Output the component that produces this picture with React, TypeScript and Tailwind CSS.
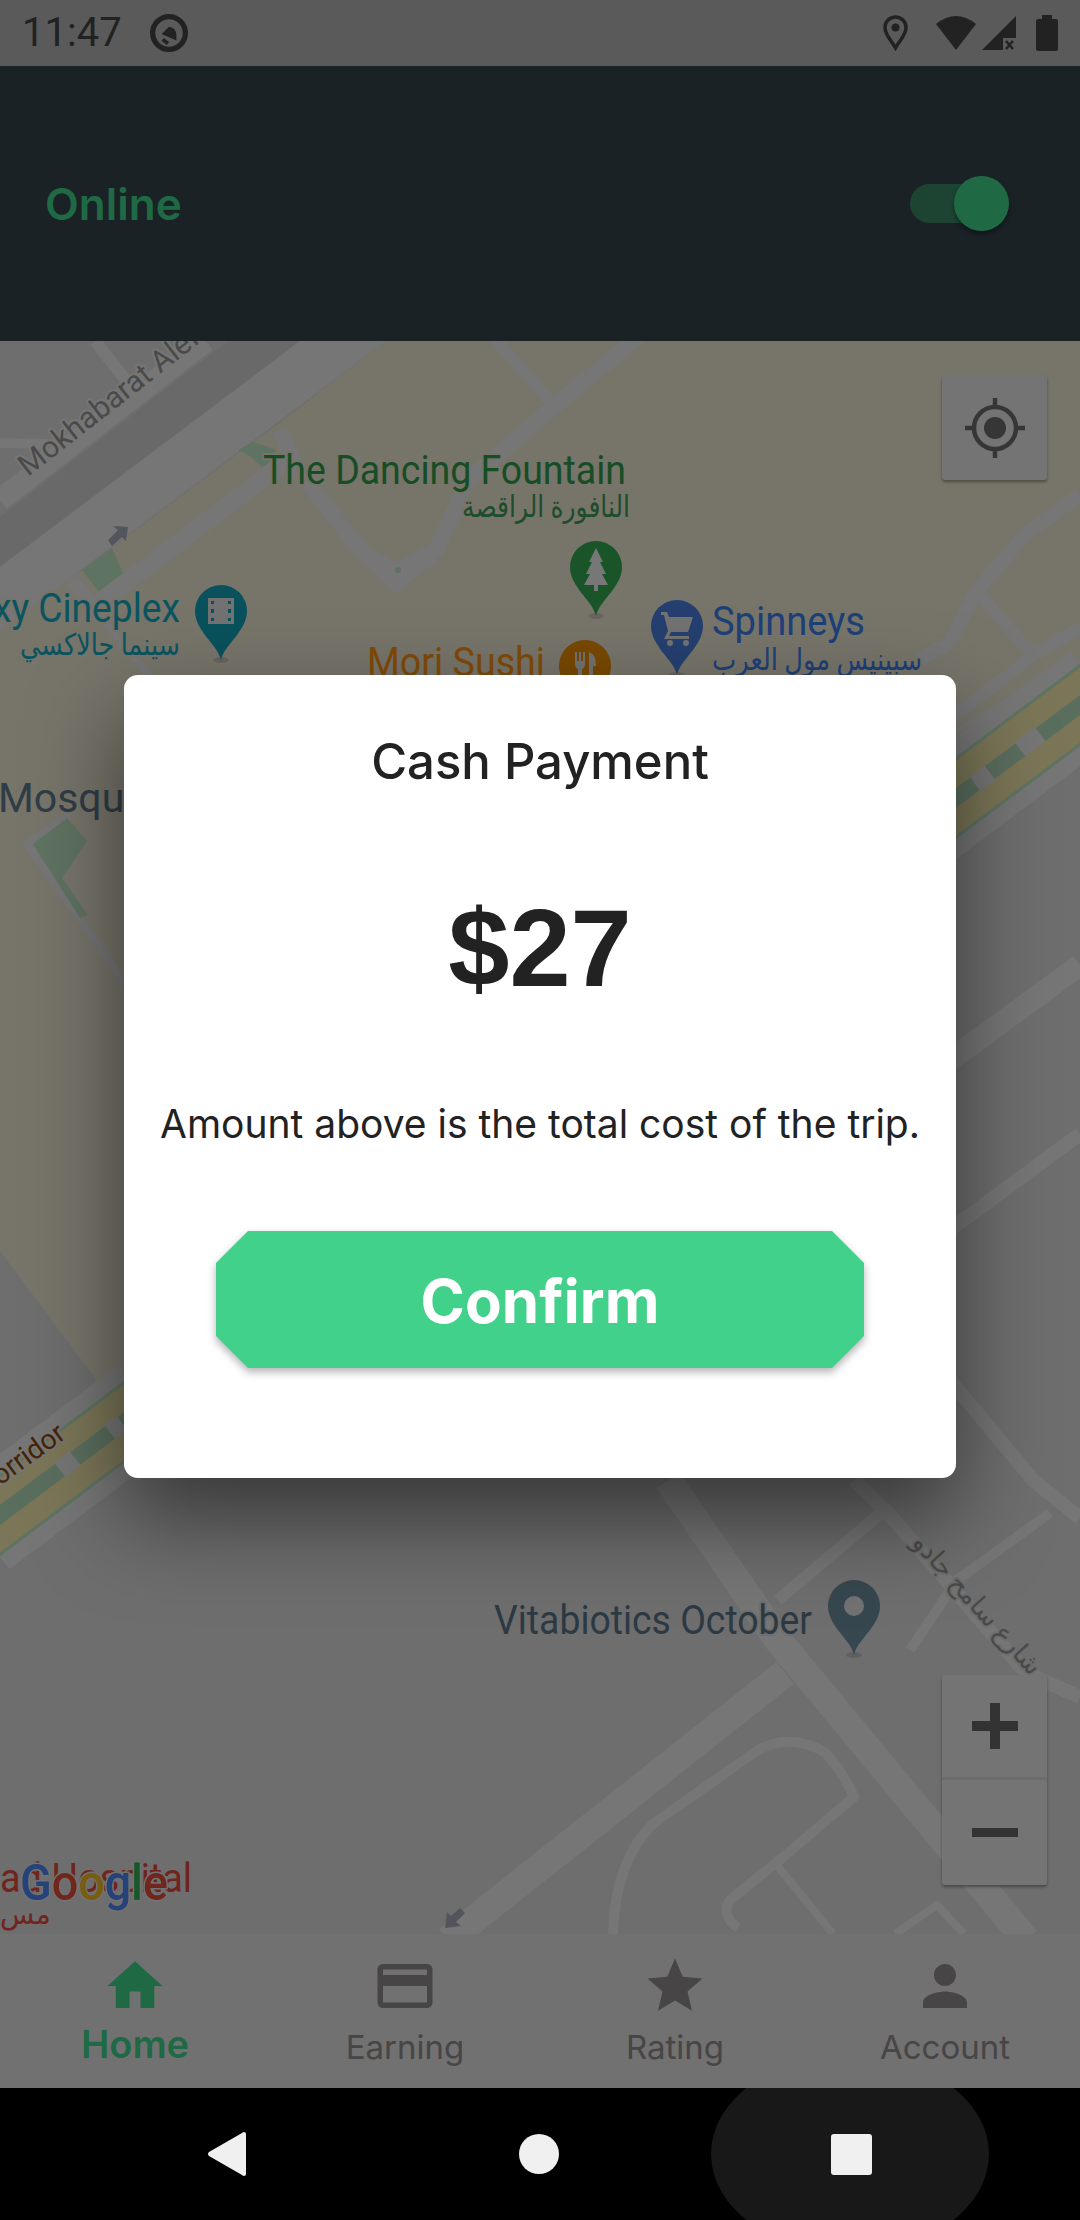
import React from "react";
import { MdHome, MdCreditCard, MdStar, MdPerson } from "react-icons/md";

const ROAD = "#ececec";
const TAN = "#eee8d4";
const GREEN = "#bfe6c4";
const AR = "Roboto, 'DejaVu Sans', sans-serif";

// one map pin, x/y is the top centre of the head
function Pin({ x, y, color, children }: { x: number; y: number; color: string; children?: React.ReactNode }) {
  return (
    <g transform={`translate(${x} ${y})`}>
      <ellipse cx="0" cy="75" rx="8" ry="3" fill="#000" opacity="0.12" />
      <path d="M0 75 C-3 60 -26 46 -26 26 A26 26 0 1 1 26 26 C26 46 3 60 0 75Z" fill={color} />
      {children}
    </g>
  );
}

function Label({ x, y, size = 41, w, fill, anchor = "start", halo = TAN, children, rotate }: {
  x: number; y: number; size?: number; w?: number; fill: string; anchor?: "start" | "end" | "middle"; halo?: string; children: React.ReactNode; rotate?: number;
}) {
  return (
    <text
      x={x}
      y={y}
      fontSize={size}
      fill={fill}
      textAnchor={anchor}
      fontFamily={AR}
      stroke={halo}
      strokeWidth="4"
      textLength={w}
      lengthAdjust={w ? "spacingAndGlyphs" : undefined}
      className="[paint-order:stroke]"
      transform={rotate ? `rotate(${rotate} ${x} ${y})` : undefined}
    >
      {children}
    </text>
  );
}

function MapView() {
  return (
    <svg viewBox="0 341 1080 1593" className="block w-full h-full" fill="none" strokeLinejoin="round">
      <rect x="0" y="341" width="1080" height="1593" fill="#dcdcdc" />

      {/* blocks */}
      <polygon points="386,341 1080,341 1080,660 95,1405 95,1378 0,1251 0,630 70,578 82,570 253,442 279,423" fill={TAN} />
      <polygon points="0,517 0,567 300,341 228,341" fill="#d2d2d2" />
      <polygon points="0,567 300,341 386,341 70,578 0,630" fill={ROAD} />
      <path d="M0 500 L206 341" stroke={ROAD} strokeWidth="22" />
      <path d="M95 341 L135 392" stroke={ROAD} strokeWidth="12" />
      <path d="M0 443 L48 444" stroke={ROAD} strokeWidth="10" />

      {/* greens in the strip */}
      <polygon points="82,570 112,548 124,575 100,593" fill={GREEN} />
      <polygon points="238,450 253,442 276,450 265,470 250,456" fill={GREEN} />
      <path d="M72 580 L100 612" stroke={ROAD} strokeWidth="14" />
      <path d="M100 602 L290 458" stroke={ROAD} strokeWidth="18" />
      <path d="M70 578 L160 690" stroke={ROAD} strokeWidth="8" />

      {/* fountain roads */}
      <path d="M280 430 L298 470 L362 552 L396 572 L436 550 L468 480 L552 408 L640 335" stroke={ROAD} strokeWidth="16" />
      <path d="M492 335 L556 408" stroke={ROAD} strokeWidth="12" />
      <path d="M362 552 L396 586 L434 556" stroke={ROAD} strokeWidth="12" />
      <circle cx="398" cy="570" r="3" fill={GREEN} />

      {/* right side streets */}
      <path d="M950 642 L977 590 L1027 533 L1080 495" stroke={ROAD} strokeWidth="14" />
      <path d="M978 592 L1032 655" stroke={ROAD} strokeWidth="12" />
      <path d="M950 720 L1033 655 L1080 628" stroke={ROAD} strokeWidth="12" />
      <path d="M957 730 L1080 660" stroke={ROAD} strokeWidth="4" />
      <path d="M920 660 L950 642" stroke={ROAD} strokeWidth="14" />

      {/* mosque */}
      <path d="M70 815 L27 844 L130 990" stroke={ROAD} strokeWidth="8" />
      <polygon points="33,844 67,818 87,841 62,878 88,915 80,918" fill={GREEN} />

      {/* corridor */}
      <path d="M-20 1530 L1100 690" stroke={ROAD} strokeWidth="98" />
      <path d="M-20 1530 L1100 690" stroke={GREEN} strokeWidth="66" />
      <path d="M-20 1530 L1100 690" stroke="#f6ecae" strokeWidth="60" />
      <path d="M-20 1530 L1100 690" stroke="#b4dcbc" strokeWidth="16" />
      <path d="M60 1470 L75 1458 M1020 749 L1040 734" stroke={ROAD} strokeWidth="18" />
      <path d="M110 1432 L122 1423 M975 784 L990 773" stroke={ROAD} strokeWidth="18" />

      {/* below corridor */}
      <path d="M950 1060 L1080 965" stroke={ROAD} strokeWidth="22" />
      <path d="M950 1230 L1080 1134" stroke={ROAD} strokeWidth="14" />
      <path d="M950 1380 L1033 1480 L1080 1518" stroke={ROAD} strokeWidth="14" />
      <path d="M668 1480 L778 1640 L1026 1940" stroke={ROAD} strokeWidth="28" />
      <path d="M854 1480 L888 1513 L1026 1673 L1080 1697" stroke={ROAD} strokeWidth="14" />
      <path d="M1050 1513 L957 1580 L910 1650" stroke={ROAD} strokeWidth="10" />
      <path d="M448 1940 L785 1673" stroke={ROAD} strokeWidth="28" />
      <path d="M778 1600 L881 1513" stroke={ROAD} strokeWidth="12" />
      <path d="M613 1934 Q615 1860 654 1823 L758 1750 Q792 1732 826 1753 Q845 1775 854 1797 L782 1858 L730 1900 Q720 1915 738 1928" stroke={ROAD} strokeWidth="10" />
      <path d="M775 1863 L833 1934" stroke={ROAD} strokeWidth="8" />
      <path d="M895 1934 L937 1905 L964 1934" stroke={ROAD} strokeWidth="8" />

      {/* arrows */}
      <path d="M108 540 L118 530 L113 526 L128 527 L126 541 L122 537 L112 546Z" fill="#a8a8ba" />
      <path d="M465 1913 L456 1922 L461 1926 L445 1928 L447 1912 L451 1916 L460 1908Z" fill="#a8a8ba" />

      {/* labels */}
      <Label x={28} y={477} size={30} fill="#949494" halo={ROAD} rotate={-38}>Mokhabarat Alef</Label>
      <Label x={263} y={484} w={363} fill="#2f9a4a">The Dancing Fountain</Label>
      <Label x={630} y={517} size={30} w={168} fill="#3a9a58" anchor="end">النافورة الراقصة</Label>
      <Label x={180} y={622} fill="#14a8c0" anchor="end" w={262}>Galaxy Cineplex</Label>
      <Label x={180} y={655} size={30} w={160} fill="#14a8c0" anchor="end">سينما جالاكسي</Label>
      <Label x={367} y={676} w={178} fill="#ff9410">Mori Sushi</Label>
      <Label x={712} y={635} w={153} fill="#3c80f0">Spinneys</Label>
      <Label x={922} y={670} size={30} w={210} fill="#3c80f0" anchor="end">سبينيس مول العرب</Label>
      <Label x={-2} y={812} fill="#5e7a8e">Mosque</Label>
      <Label x={0} y={1486} size={28} fill="#8a4a10" halo={ROAD} rotate={-36}>orridor</Label>
      <Label x={494} y={1634} w={318} fill="#5a7488" halo="#dcdcdc">Vitabiotics October</Label>
      <Label x={971} y={1610} size={26} fill="#949494" halo="#dcdcdc" anchor="middle" rotate={48}>شارع سامح جادو</Label>
      <Label x={0} y={1892} w={192} fill="#e0483a" halo="#dcdcdc">ad Hospital</Label>
      <Label x={0} y={1924} size={28} fill="#e0483a" halo="#dcdcdc">مس</Label>

      {/* google mark */}
      <text x="20" y="1900" fontSize="50" textLength="148" lengthAdjust="spacingAndGlyphs" fontFamily="Roboto, sans-serif" fontWeight="500" stroke="#e4e4e4" strokeWidth="3" className="[paint-order:stroke]">
        <tspan fill="#4a86f0">G</tspan>
        <tspan fill="#e04a3a">o</tspan>
        <tspan fill="#f0b820">o</tspan>
        <tspan fill="#4a86f0">g</tspan>
        <tspan fill="#2fae52">l</tspan>
        <tspan fill="#e04a3a">e</tspan>
      </text>

      {/* pins */}
      <Pin x={596} y={541} color="#34a853">
        <path d="M0 7 L7 21 L4 21 L10 33 L6 33 L12 44 L2 44 L2 50 L-2 50 L-2 44 L-12 44 L-6 33 L-10 33 L-4 21 L-7 21Z" fill="#eee" />
      </Pin>
      <Pin x={221} y={585} color="#12a2b8">
        <path d="M-13 13 H13 V39 H-13Z M-10 16 V19 H-7 V16Z M7 16 V19 H10 V16Z M-10 24 V28 H-7 V24Z M7 24 V28 H10 V24Z M-10 33 V36 H-7 V33Z M7 33 V36 H10 V33Z" fill="#e4e4e4" fillRule="evenodd" />
      </Pin>
      <Pin x={677} y={600} color="#4a80e0">
        <path d="M-16 12 H-10 L-8 17 H16 L11 32 H-6 L-8 36 H12 V39 H-13 L-9 31 L-13 15 H-16Z" fill="#e4e4e4" />
        <circle cx="-7" cy="43" r="3" fill="#e4e4e4" />
        <circle cx="9" cy="43" r="3" fill="#e4e4e4" />
      </Pin>
      <Pin x={585} y={640} color="#f09000">
        <path d="M-10 12 V24 Q-10 28 -7 29 V42 H-3 V29 Q0 28 0 24 V12 H-2 V21 H-4 V12 H-6 V21 H-8 V12Z M4 12 Q11 14 11 26 H8 V42 H4Z" fill="#e4e4e4" />
      </Pin>
      <Pin x={854} y={1580} color="#6e8e9e">
        <circle cx="0" cy="26" r="10" fill="#e4e4e4" />
      </Pin>
    </svg>
  );
}

function MapControls() {
  return (
    <>
      <div className="absolute left-[942px] top-[34px] w-[105px] h-[105px] bg-[#e8e8e8] rounded-[3px] shadow-[0_2px_3px_rgba(0,0,0,0.35)] flex items-center justify-center">
        <svg width="60" height="60" viewBox="0 0 60 60" fill="none" stroke="#6c6c6c">
          <circle cx="30" cy="30" r="21" strokeWidth="4.5" />
          <circle cx="30" cy="30" r="11" fill="#6c6c6c" stroke="none" />
          <path d="M30 0V9M30 51V60M0 30H9M51 30H60" strokeWidth="4.5" />
        </svg>
      </div>
      <div className="absolute left-[942px] top-[1334px] w-[105px] h-[210px] bg-[#e8e8e8] rounded-[3px] shadow-[0_2px_3px_rgba(0,0,0,0.35)] flex flex-col">
        <div className="h-[105px] flex items-center justify-center border-b-[3px] border-[#d8d8d8]">
          <svg width="46" height="46" viewBox="0 0 46 46" fill="#666">
            <path d="M18 0H28V18H46V28H28V46H18V28H0V18H18Z" />
          </svg>
        </div>
        <div className="flex-1 flex items-center justify-center">
          <div className="w-[46px] h-[9px] bg-[#666]" />
        </div>
      </div>
    </>
  );
}

function Tab({ icon: Icon, label, active }: { icon: React.ComponentType<{ size?: number; className?: string }>; label: string; active?: boolean }) {
  return (
    <div className={`flex-1 flex flex-col items-center pt-[19px] ${active ? "text-[#3ed48a]" : "text-[#8e8a8c]"}`}>
      <Icon size={66} />
      <span className={active ? "text-[38px] leading-[46px] font-semibold mt-[2px]" : "text-[33px] leading-[46px] mt-[5px]"}>{label}</span>
    </div>
  );
}

export default function App() {
  return (
    <div className="w-[1080px] h-[2220px] flex flex-col overflow-hidden bg-black font-['Inter',sans-serif]">
      <div className="relative flex-1 flex flex-col">
        {/* status bar */}
        <div className="h-[66px] bg-[#b4b4b4] flex items-center justify-between pl-[22px] pr-[22px] text-[#444]">
          <div className="flex items-center gap-[28px]">
            <span className="font-['Roboto',sans-serif] text-[40px] leading-[66px]">11:47</span>
            <svg width="38" height="38" viewBox="0 0 36 36" fill="none" stroke="#444" strokeWidth="5">
              <circle cx="18" cy="18" r="15.5" />
              <path d="M11 19 L18 12 Q25 13 25 20 V25Z" fill="#444" stroke="none" />
              <path d="M12 24 L17 28" strokeWidth="3.5" />
            </svg>
          </div>
          <div className="flex items-center">
            <svg width="25" height="36" viewBox="0 0 25 36" fill="none" stroke="#444" strokeWidth="3.5">
              <path d="M12.5 33 C8 25 2 20 2 12.5 A10.5 10.5 0 0 1 23 12.5 C23 20 17 25 12.5 33Z" />
              <circle cx="12.5" cy="12.5" r="4" fill="#444" stroke="none" />
            </svg>
            <svg width="42" height="36" viewBox="0 0 42 36" fill="#444" className="ml-[27px]">
              <path d="M21 35 L1 9 Q21 -7 41 9Z" />
            </svg>
            <svg width="34" height="35" viewBox="0 0 34 35" fill="#444" className="ml-[5px]">
              <path d="M0 34 L34 0 V22 H21 V34Z" />
              <path d="M24 25 L31 33 M31 25 L24 33" stroke="#444" strokeWidth="2.5" />
            </svg>
            <svg width="22" height="36" viewBox="0 0 22 36" fill="#444" className="ml-[20px]">
              <path d="M6 0H16V4H20Q22 4 22 6V34Q22 36 20 36H2Q0 36 0 34V6Q0 4 2 4H6Z" />
            </svg>
          </div>
        </div>

        {/* header */}
        <div className="h-[275px] bg-[#34444c] flex items-center justify-between pl-[45px] pr-[71px]">
          <span className="text-[44px] font-semibold text-[#3ed48a] leading-none">Online</span>
          <div className="relative w-[99px] h-[39px] rounded-full bg-[#3a8866]">
            <div className="absolute right-0 -top-[8px] w-[55px] h-[55px] rounded-full bg-[#3ed48a] shadow-[0_3px_4px_rgba(0,0,0,0.4)]" />
          </div>
        </div>

        {/* map */}
        <div className="relative flex-1 min-h-0">
          <MapView />
          <MapControls />
        </div>

        {/* tabs */}
        <div className="h-[154px] bg-[#e2e2e2] flex">
          <Tab icon={MdHome} label="Home" active />
          <Tab icon={MdCreditCard} label="Earning" />
          <Tab icon={MdStar} label="Rating" />
          <Tab icon={MdPerson} label="Account" />
        </div>

        {/* dialog */}
        <div className="absolute inset-0 bg-black/50 flex justify-center pt-[675px]">
          <div className="w-[832px] h-[803px] bg-white rounded-[14px] flex flex-col items-center pt-[57px] text-[#222] shadow-[0_40px_90px_rgba(0,0,0,0.5)]">
            <div className="text-[49px] leading-[60px] font-medium">Cash Payment</div>
            <div className="mt-[96px] text-[110px] leading-[120px] font-bold font-['Liberation_Sans',sans-serif]">$27</div>
            <div className="mt-[91px] text-[39px] leading-[50px]">Amount above is the total cost of the trip.</div>
            <div className="mt-[82px] drop-shadow-[0_4px_4px_rgba(0,0,0,0.3)]">
              <button className="block w-[648px] h-[137px] pt-[3px] bg-[#42d18b] text-white text-[60px] font-bold [clip-path:polygon(32px_0,616px_0,100%_32px,100%_105px,616px_100%,32px_100%,0_105px,0_32px)]">
                Confirm
              </button>
            </div>
          </div>
        </div>
      </div>

      {/* android nav */}
      <div className="relative h-[132px] bg-black flex items-center justify-center overflow-hidden">
        <div className="absolute left-[711px] top-[-33px] w-[278px] h-[198px] rounded-[50%] bg-[#181818]" />
        <div className="relative flex -ml-[2px]">
          <div className="w-[312px] flex justify-center">
            <svg width="40" height="46" viewBox="0 0 40 46"><path d="M37 1 Q39 1 39 3 V43 Q39 45 37 45 Q36 45 35 44 L2 25 Q0 23 2 21 L35 2 Q36 1 37 1Z" fill="#f0f0f0" /></svg>
          </div>
          <div className="w-[312px] flex justify-center items-center">
            <div className="w-[40px] h-[40px] rounded-full bg-[#f0f0f0]" />
          </div>
          <div className="w-[312px] flex justify-center items-center">
            <div className="w-[41px] h-[41px] rounded-[3px] bg-[#f0f0f0]" />
          </div>
        </div>
      </div>
    </div>
  );
}
